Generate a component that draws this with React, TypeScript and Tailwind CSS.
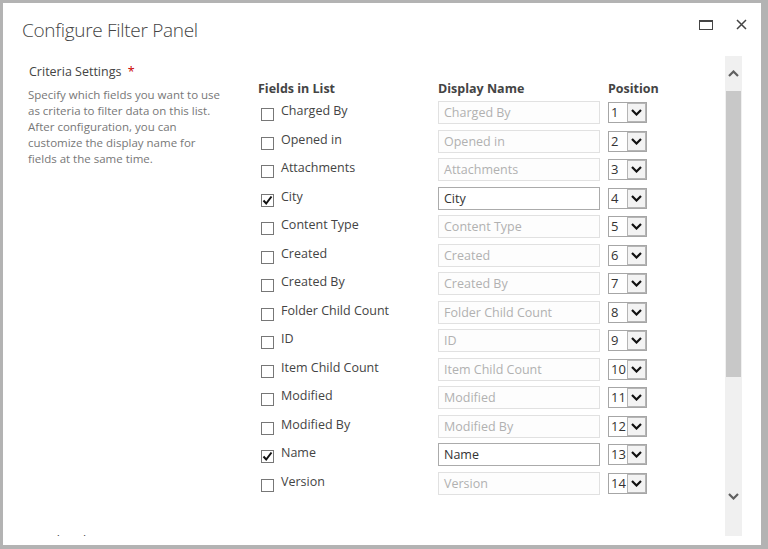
import React from "react";

const rows: [string, boolean][] = [
  ["Charged By", false],
  ["Opened in", false],
  ["Attachments", false],
  ["City", true],
  ["Content Type", false],
  ["Created", false],
  ["Created By", false],
  ["Folder Child Count", false],
  ["ID", false],
  ["Item Child Count", false],
  ["Modified", false],
  ["Modified By", false],
  ["Name", true],
  ["Version", false],
];

function Chevron({ up, className }: { up?: boolean; className?: string }) {
  return (
    <svg width="11" height="7" viewBox="0 0 11 7" className={className}>
      <path
        d={up ? "M1 6 L5.5 1.5 L10 6" : "M1 1 L5.5 5.5 L10 1"}
        fill="none"
        stroke="currentColor"
        strokeWidth="2.2"
      />
    </svg>
  );
}

function Checkbox({ checked }: { checked: boolean }) {
  return (
    <div className="w-[13px] h-[13px] border border-[#777] bg-white flex items-center justify-center">
      {checked && (
        <svg width="11" height="11" viewBox="0 0 11 11">
          <path d="M1.5 5.5 L4.2 8.5 L9.5 1.5" fill="none" stroke="#111" strokeWidth="2" />
        </svg>
      )}
    </div>
  );
}

function PosSelect({ n }: { n: number }) {
  return (
    <div className="w-[39px] h-[21px] border border-[#a6a6a6] bg-white flex">
      <div className="flex-1 text-[13px] leading-[19px] pl-[2px] text-[#333]">{n}</div>
      <div className="w-[19px] h-full border border-[#b5b5b5] bg-[#f3f3f3] flex items-center justify-center text-[#111]">
        <Chevron />
      </div>
    </div>
  );
}

export default function App() {
  return (
    <div
      className="w-[768px] h-[549px] bg-[#b3b3b3] pt-[3px] pl-[3px] overflow-hidden"
      style={{ fontFamily: '"Open Sans", "Noto Sans", sans-serif' }}
    >
      <div className="w-[758px] h-[542px] bg-white flex flex-col">
        {/* Title bar */}
        <div className="h-[53px] flex items-start justify-between shrink-0">
          <div className="pl-[19px] pt-[14px] text-[19px] leading-[27px] font-light text-[#444] tracking-[-0.3px]">
            Configure Filter Panel
          </div>
          <div className="flex items-center gap-[23px] pt-[16px] pr-[14px]">
            <svg width="14" height="10" viewBox="0 0 14 10">
              <rect x="0.5" y="0.5" width="13" height="9" fill="none" stroke="#444" strokeWidth="1" />
              <rect x="0" y="0" width="14" height="2" fill="#444" />
            </svg>
            <svg width="11" height="11" viewBox="0 0 11 11">
              <path d="M1 1 L10 10 M10 1 L1 10" stroke="#444" strokeWidth="1.5" />
            </svg>
          </div>
        </div>

        {/* Body */}
        <div className="h-[480px] flex shrink-0">
          <div className="flex-1 overflow-hidden">
            <div className="flex">
              {/* Left description column */}
              <div className="w-[255px] shrink-0 pl-[26px] pt-[6px]">
                <div className="text-[12.5px] leading-[20px] text-[#444]">
                  Criteria Settings <span className="text-[#c00] ml-[3px]">*</span>
                </div>
                <div className="mt-[5px] -ml-[1px] w-[195px] text-[11.5px] leading-[16px] text-[#777]">
                  Specify which fields you want to use as criteria to filter data on this list. After configuration, you can customize the display name for fields at the same time.
                </div>
              </div>
              {/* Table */}
              <div className="pt-[23px]">
                <div className="flex h-[22px] pt-[1px] text-[12.5px] leading-[18px] font-bold text-[#444]">
                  <div className="w-[180px]">Fields in List</div>
                  <div className="w-[170px]">Display Name</div>
                  <div>Position</div>
                </div>
                {rows.map(([name, checked], i) => (
                  <div key={name} className={`flex items-start ${i % 2 === 0 ? "h-[29px]" : "h-[28px]"}`}>
                    <div className="w-[180px] flex items-start">
                      <div className="pl-[3px] pt-[7px]">
                        <Checkbox checked={checked} />
                      </div>
                      <div className="ml-[7px] pt-[1px] text-[12.5px] leading-[18px] text-[#444]">{name}</div>
                    </div>
                    <div className="w-[170px]">
                      <div
                        className={`w-[162px] h-[23px] border pl-[5px] text-[12.5px] leading-[22px] ${
                          checked ? "border-[#ababab] text-[#333] bg-white" : "border-[#e1e1e1] text-[#b1b1b1] bg-[#fdfdfd]"
                        }`}
                      >
                        {name}
                      </div>
                    </div>
                    <div className="pt-[1px]">
                      <PosSelect n={i + 1} />
                    </div>
                  </div>
                ))}
              </div>
            </div>
            <div className="pl-[25px] mt-[31px] text-[12.5px] leading-[20px] text-[#444]">Match Rules</div>
          </div>

          {/* Scrollbar */}
          <div className="w-[17px] h-full bg-[#f0f0f0] flex flex-col items-center">
            <div className="h-[35px] w-full flex items-center justify-center text-[#606060]">
              <Chevron up />
            </div>
            <div className="w-[15px] h-[286px] bg-[#c8c8c8]" />
            <div className="flex-1" />
            <div className="h-[44px] w-full flex items-start justify-center pt-[1px] text-[#606060]">
              <Chevron />
            </div>
          </div>
          <div className="w-[19px]" />
        </div>
      </div>
    </div>
  );
}
